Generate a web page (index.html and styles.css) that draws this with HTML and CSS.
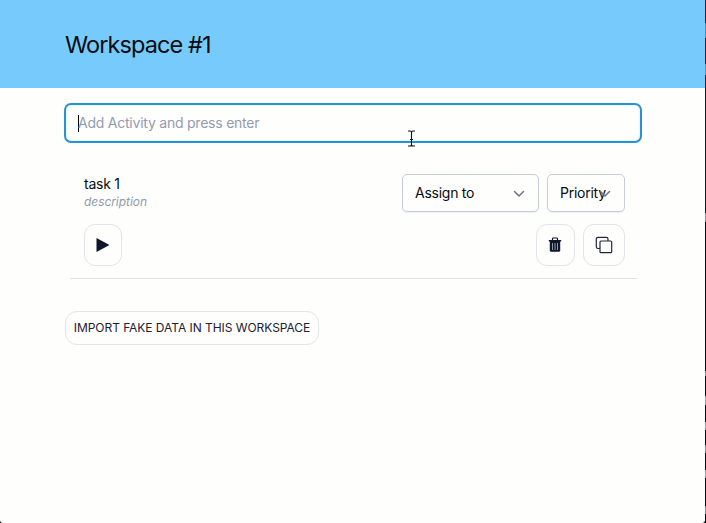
FILE: index.html
```html
<!DOCTYPE html>
<html lang="en">
<head>
<meta charset="utf-8">
<title>Workspace #1</title>
<link rel="stylesheet" href="styles.css">
</head>
<body>
<div class="desktop">
  <div class="window">
    <header class="header"><h1 class="title">Workspace #1</h1></header>
    <main class="main">
      <div class="field"><span class="caret"></span><span class="placeholder">Add Activity and press enter</span></div>
      <section class="task">
        <div class="row">
          <div class="info">
            <div class="name">task 1</div>
            <div class="desc">description</div>
          </div>
          <div class="select assign"><span>Assign to</span><svg class="chevron" viewBox="0 0 12 8"><path d="M1.500 1.500 6 6l4.500-4.500"/></svg></div>
          <div class="select priority"><span>Priority</span><svg class="chevron" viewBox="0 0 12 8"><path d="M1.500 1.500 6 6l4.500-4.500"/></svg></div>
        </div>
        <div class="row actions">
          <button class="icon-btn play" aria-label="Start"><svg width="14" height="14" viewBox="0 0 14 14"><path d="M.5 0v14l13-7z" fill="#0f172a"/></svg></button>
          <button class="icon-btn trash" aria-label="Delete"><svg width="14" height="16" viewBox="0 0 14 16"><path d="M4.500 3V1.700q0-.7.7-.7h3.600q.7 0 .7.700V3" fill="none" stroke="#0f172a" stroke-width="1.200"/><path d="M.8 3h12.400v1.500H.8z" fill="#0f172a"/><path d="M1.800 4h10.400v9.500q0 1.300-1.300 1.300H3.100q-1.300 0-1.300-1.300z" fill="#0f172a"/><path d="M4.500 6v7M7 6v7M9.500 6v7" stroke="#a4a9b3" stroke-width=".9"/></svg></button>
          <button class="icon-btn copy" aria-label="Duplicate"><svg width="18" height="18" viewBox="0 0 18 18" fill="none" stroke="#20283a" stroke-width="1.200"><path d="M5 12.500H3a1.700 1.700 0 0 1-1.700-1.700V3A1.700 1.700 0 0 1 3 1.300h8.300A1.700 1.700 0 0 1 13 3v2"/><rect x="5" y="5" width="11.700" height="11.700" rx="1"/></svg></button>
        </div>
      </section>
      <button class="import">IMPORT FAKE DATA IN THIS WORKSPACE</button>
    </main>
  </div>
  <div class="edge"></div>
  <svg class="pointer" width="9" height="17" viewBox="0 0 9 17"><path d="M1 1h2q1.500 0 1.500 1.500v12Q4.500 16 3 16H1M8 1H6Q4.500 1 4.500 2.500M4.500 14.500Q4.500 16 6 16h2M3 9.500h3"/></svg>
</div>
</body>
</html>
```
FILE: styles.css
```css
* { box-sizing: border-box; }
body { margin: 0; background: #050709; font-family: Inter, "Liberation Sans", sans-serif; color: #080b12; }
.desktop { position: relative; width: 706px; height: 523px; display: flex; overflow: hidden; }
.window { width: 705px; height: 523px; background: #fefefd; border-radius: 0 0 3px 3px; overflow: hidden; }
.edge { width: 1px; height: 523px; background: linear-gradient(#101820 23px, #7776b9 23px 38px, #101820 38px 64px, #7d8a93 64px 75px, #101820 75px 213px, #8e8e91 213px 222px, #08090b 222px 371px, #8e8e91 371px 376px, #08090b 376px 396px, #a0a0a2 396px 405px, #08090b 405px 422px, #a0a0a2 422px 430px, #08090b 430px 445px, #88888b 445px 453px, #08090b 453px 470px, #a0a0a2 470px 478px, #08090b 478px 506px, #88888b 506px 514px, #08090b 514px); }
.header { height: 88px; padding: 0 65px; background: #76cbfc; display: flex; align-items: center; }
.title { margin: 2px 0 0; font-size: 23.5px; line-height: 32px; font-weight: 400; letter-spacing: -0.9px; white-space: nowrap; color: #070b10; }
.main { padding: 15px 63px 0 64px; }
.field { height: 40px; border: 2px solid #2c91cf; border-radius: 7px; display: flex; align-items: center; padding-left: 12px; font-size: 14px; color: #949bb0; box-shadow: inset 0 0 1px 1px #e0fbfc; }
.caret { width: 1px; height: 17px; background: #000; margin-right: -1px; }
.placeholder { white-space: nowrap; letter-spacing: -0.23px; padding-bottom: 2px; }
.task { margin: 31px 5px 0 6px; height: 105px; padding: 0 12px 0 14px; border-bottom: 1px solid #e1e3e7; }
.row { display: flex; align-items: flex-start; }
.info { flex: 1; }
.name { font-size: 14px; line-height: 20px; letter-spacing: -0.25px; }
.desc { font-size: 12px; line-height: 16px; font-style: italic; letter-spacing: -0.06px; color: #909bac; }
.select { height: 38px; border: 1px solid #c8cbdc; border-radius: 5px; display: flex; align-items: center; justify-content: space-between; padding: 0 12px; font-size: 14px; letter-spacing: -0.25px; white-space: nowrap; box-shadow: 0 1px 1px #edf0f2; }
.select span { padding-bottom: 2px; }
.assign { width: 137px; margin-right: 8px; }
.priority { width: 78px; position: relative; }
.chevron { width: 12px; height: 8px; fill: none; stroke: #6b7280; stroke-width: 1.5; stroke-linecap: round; stroke-linejoin: round; }
.assign .chevron { margin: 2px 1px 0 0; }
.priority .chevron { position: absolute; right: 13px; top: 15px; }
.actions { margin-top: 12px; }
.icon-btn { width: 38px; height: 42px; padding: 0; background: #fefefd; border: 1px solid #e2e5eb; border-radius: 11px; display: flex; align-items: center; justify-content: center; }
.trash { width: 39px; margin-left: auto; margin-right: 8px; padding-right: 1px; }
.copy { width: 42px; padding-right: 1px; }
.import { display: block; margin: 32px 0 0 1px; width: 254px; height: 34px; padding: 0; border: 1px solid #e2e5e9; border-radius: 12px; background: #fefefd; font: 400 12px/16px Inter, "Liberation Sans", sans-serif; letter-spacing: -0.05px; color: #1c2130; white-space: nowrap; }
.pointer { position: absolute; left: 407px; top: 130px; fill: none; stroke: #111; stroke-width: 1.1; }
```
